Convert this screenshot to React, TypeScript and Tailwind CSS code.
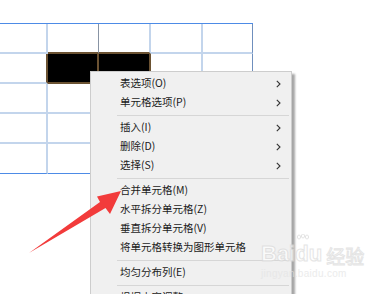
import React from "react";

// table cells: width + right border per column
const colW = ["w-[48px]", "w-[51px]", "w-[52px]", "w-[52px]", "w-[50px]"];

type Item = { label: string; sub?: boolean } | "sep";

const menu: Item[] = [
  { label: "表选项(O)", sub: true },
  { label: "单元格选项(P)", sub: true },
  "sep",
  { label: "插入(I)", sub: true },
  { label: "删除(D)", sub: true },
  { label: "选择(S)", sub: true },
  "sep",
  { label: "合并单元格(M)" },
  { label: "水平拆分单元格(Z)" },
  { label: "垂直拆分单元格(V)" },
  { label: "将单元格转换为图形单元格" },
  "sep",
  { label: "均匀分布列(E)" },
  "sep",
  { label: "根据内容调整" },
];

function cellClass(r: number, c: number) {
  const black = r === 1 && (c === 1 || c === 2);
  const brownRight = r === 1 && c <= 2;
  const brownBottom = (r === 0 || r === 1) && (c === 1 || c === 2);
  const right =
    c === 4
      ? "border-r border-r-[#6f8fbd]"
      : c === 1
      ? brownRight
        ? "border-r-2 border-r-[#6b5232]"
        : "border-r border-r-[#8894a4]"
      : brownRight
      ? "border-r-2 border-r-[#6b5232]"
      : "border-r-2 border-r-[#c3d5ec]";
  const bottom =
    r === 4
      ? "border-b border-b-[#4d8be6]"
      : brownBottom
      ? "border-b-2 border-b-[#6b5232]"
      : "border-b-2 border-b-[#c3d5ec]";
  return `h-full ${right} ${bottom} ${black ? "bg-black" : "bg-white"}`;
}

function Chevron() {
  return (
    <svg width="5" height="8" viewBox="0 0 5 8" className="shrink-0">
      <polyline points="0.8,0.8 4,4 0.8,7.2" fill="none" stroke="#333" strokeWidth="1.1" />
    </svg>
  );
}

export default function App() {
  return (
    <div className="relative w-[379px] h-[294px] overflow-hidden bg-white font-['Noto_Sans_CJK_SC','Noto_Sans',sans-serif]">
      {/* ── Table ─────────────────────────────── */}
      <div className="pt-[23px]">
        <div className="w-[253px] border-t border-t-[#4d8be6]">
          {[0, 1, 2, 3, 4].map((r) => (
            <div key={r} className="flex h-[30px]">
              {colW.map((w, c) => (
                <div key={c} className={`${w} ${cellClass(r, c)}`} />
              ))}
            </div>
          ))}
        </div>
      </div>

      {/* ── Context menu ──────────────────────── */}
      <div className="absolute left-[90px] top-[71px] w-[202px] h-[240px] bg-[#f0f0f0] border border-[#cdcdcd] shadow-[3px_3px_2px_rgba(0,0,0,0.35)] pt-[2px]">
        {menu.map((it, i) =>
          it === "sep" ? (
            <div key={i} className="h-[6px] flex items-center ml-[26px] mr-[2px]">
              <div className="h-px w-full bg-[#d6d6d6]" />
            </div>
          ) : (
            <div key={i} className="h-[19px] flex items-center pl-[29px] pr-[10px] text-[10.5px] text-[#1b1b1b] leading-none">
              <span className="flex-1 whitespace-nowrap">{it.label}</span>
              {it.sub && <Chevron />}
            </div>
          )
        )}
      </div>

      {/* ── Red arrow ─────────────────────────── */}
      <svg className="absolute left-0 top-0" width="379" height="294" viewBox="0 0 379 294">
        <polygon points="29,253 100,202 97,196.5 121,191 110,214 105.5,208" fill="#f23b3b" />
      </svg>

      {/* ── Watermark ─────────────────────────── */}
      <div className="absolute left-[261px] top-[243px] flex flex-col items-start pointer-events-none opacity-70">
        <div className="flex items-end leading-none text-[22px] font-bold font-['Liberation_Sans',sans-serif] text-white [-webkit-text-stroke:1px_#dadada]">
          <span>Bai</span>
          <span className="relative">
            <svg width="14" height="12" viewBox="0 0 14 12" className="absolute -top-[9px] left-[1px]">
              <g fill="none" stroke="#dadada" strokeWidth="1">
                <ellipse cx="3" cy="3" rx="1.6" ry="2" />
                <ellipse cx="7" cy="2" rx="1.6" ry="2" />
                <ellipse cx="11" cy="3" rx="1.6" ry="2" />
              </g>
            </svg>
            du
          </span>
          <span className="ml-[4px] text-[19px] font-['Noto_Sans_CJK_SC',sans-serif] font-normal">经验</span>
        </div>
        <div className="mt-[4px] text-[10px] leading-none tracking-[0.3px] font-['Liberation_Sans',sans-serif] text-[#e4e4e4]">
          jingyan.baidu.com
        </div>
      </div>
    </div>
  );
}
